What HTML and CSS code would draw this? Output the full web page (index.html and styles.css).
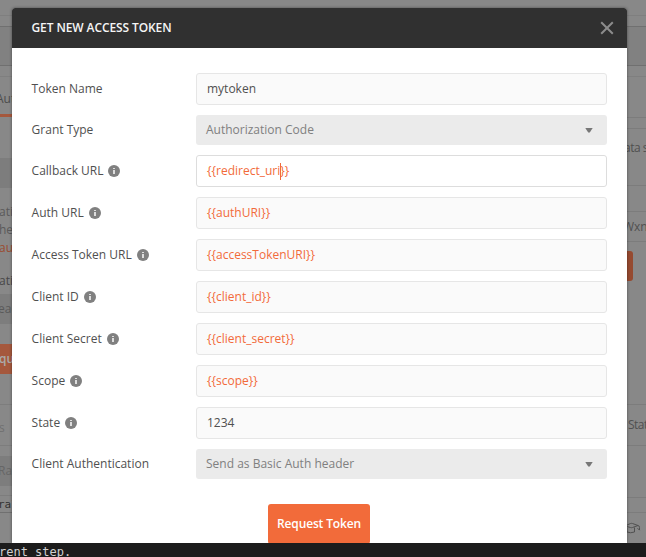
FILE: index.html
```html
<!DOCTYPE html>
<html lang="en">
<head>
<meta charset="utf-8">
<title>Get new access token</title>
<link rel="stylesheet" href="styles.css">
</head>
<body>
<div class="workspace">
  <div class="bar tabs"></div>
  <div class="bar toolbar"></div>
  <div class="bar spacer"></div>
  <div class="panes">
    <div class="pane left">
      <div class="cell auth-tab">Aut</div>
      <div class="cell gap-a"></div>
      <div class="cell field">&nbsp;</div>
      <div class="cell note first">ati</div>
      <div class="cell note">he</div>
      <div class="cell note link">au</div>
      <div class="cell label">ati</div>
      <div class="cell field header">eac</div>
      <div class="cell gap-b"></div>
      <div class="cell action">qu</div>
      <div class="cell gap-c"></div>
      <div class="cell response">s</div>
      <div class="cell gap-d"></div>
      <div class="cell field raw">Ra</div>
      <div class="cell gap-e"></div>
      <div class="cell code">ral</div>
    </div>
    <div class="pane right">
      <div class="cell r-tabs"></div>
      <div class="cell r-sub"></div>
      <div class="cell r-data">ata s</div>
      <div class="cell r-head"></div>
      <div class="cell r-token">Wxn</div>
      <div class="cell r-action"><span></span></div>
      <div class="cell r-status">Stat</div>
      <div class="cell r-body"></div>
      <div class="cell r-foot"></div>
      <div class="cell r-learn">
        <svg width="17" height="14" viewBox="0 0 17 14" fill="none" stroke="#505050" stroke-width="1"><path d="M0 4 5.500 1.500Q6.500 1.200 7.500 1.500L13 3.500 7.500 5.500Q6.500 5.900 5.500 5.500L0 4M2 5.500V10Q5.500 11.500 9.500 10V5.500M13 3.500Q14.500 3.700 14.500 5.500V8M12.500 6.200 14.500 8.200"/></svg>
      </div>
    </div>
  </div>
</div>
<div class="terminal">rent step.</div>

<div class="modal">
  <div class="modal-head">
    <span>GET NEW ACCESS TOKEN</span>
    <svg width="14" height="14" viewBox="0 0 14 14" stroke="#8c8c8c" stroke-width="2"><path d="M1.200 1.200 12.800 12.800M12.800 1.200 1.200 12.800"/></svg>
  </div>
  <div class="modal-body">
    <div class="row"><div class="name">Token Name</div><div class="input">mytoken</div></div>
    <div class="row"><div class="name">Grant Type</div><div class="select"><span>Authorization Code</span><i class="arrow"></i></div></div>
    <div class="row"><div class="name">Callback URL<i class="info"></i></div><div class="input var focus">{{redirect_uri<i class="caret"></i>}}</div></div>
    <div class="row"><div class="name">Auth URL<i class="info"></i></div><div class="input var">{{authURI}}</div></div>
    <div class="row"><div class="name">Access Token URL<i class="info"></i></div><div class="input var">{{accessTokenURI}}</div></div>
    <div class="row"><div class="name">Client ID<i class="info"></i></div><div class="input var">{{client_id}}</div></div>
    <div class="row"><div class="name">Client Secret<i class="info"></i></div><div class="input var">{{client_secret}}</div></div>
    <div class="row"><div class="name">Scope<i class="info"></i></div><div class="input var">{{scope}}</div></div>
    <div class="row"><div class="name">State<i class="info"></i></div><div class="input">1234</div></div>
    <div class="row"><div class="name">Client Authentication</div><div class="select"><span>Send as Basic Auth header</span><i class="arrow"></i></div></div>
    <div class="request">Request Token</div>
  </div>
</div>
</body>
</html>
```
FILE: styles.css
```css
* { box-sizing: border-box; }
body {
  margin: 0;
  width: 646px;
  height: 557px;
  overflow: hidden;
  position: relative;
  font: 12px/18px "Open Sans", sans-serif;
  color: #505050;
}
.workspace { height: 543px; background: #888; overflow: hidden; }
.bar { border-bottom: 1px solid #7f7f7f; }
.tabs { height: 16px; }
.toolbar { height: 50px; border-bottom-color: #707070; background: linear-gradient(#888 10px, #707070 10px, #707070 11px, #818181 11px); }
.spacer { height: 11px; }
.panes { display: flex; justify-content: space-between; }
.pane { overflow: hidden; white-space: nowrap; }
.left { width: 20px; }
.right { width: 19px; }
.cell { display: flex; align-items: center; flex: none; }

.left .cell { color: #5a5a5a; text-indent: -1px; }
.left .auth-tab { height: 40px; padding-top: 7px; border-bottom: 3px solid #a5583d; color: #4c4c4c; text-indent: -4px; }
.gap-a { height: 41px; }
.left .field { height: 30px; background: #7d7d7d; }
.left .note { height: 18px; }
.left .first { height: 33px; padding-top: 15px; }
.left .link { color: #9b4b30; }
.left .label { height: 37px; padding-top: 11px; color: #474747; }
.left .header { text-indent: -2px; }
.gap-b { height: 20px; }
.left .action { height: 30px; background: #a5583d; color: #aaa; font-weight: 600; }
.gap-c { height: 31px; border-bottom: 1px solid #7d7d7d; }
.left .response { height: 41px; padding-top: 5px; border-bottom: 1px solid #7d7d7d; color: #707070; }
.gap-d { height: 10px; }
.left .raw { color: #666; text-indent: -2px; }
.gap-e { height: 10px; border-bottom: 1px solid #7d7d7d; }
.left .code { height: 17px; border-bottom: 1px solid #707070; font: 11px "DejaVu Sans Mono", monospace; color: #333; text-indent: -2px; }

.right .cell { border-bottom: 1px solid #7c7c7c; }
.r-tabs { height: 41px; }
.r-sub { height: 11px; }
.r-data { height: 57px; padding-bottom: 18px; text-indent: -3px; letter-spacing: -.5px; color: #505050; }
.r-head { height: 26px; }
.r-token { height: 30px; text-indent: -4px; }
.r-action { height: 163px; align-items: flex-start; padding-top: 9px; }
.r-action span { width: 6px; height: 30px; border-radius: 0 3px 3px 0; background: #964a30; }
.r-status { height: 41px; padding-left: 1px; letter-spacing: -.5px; }
.r-body { height: 52px; }
.r-foot { height: 15px; }
.right .r-learn { height: 30px; border: 0; margin-left: -2px; padding-top: 2px; }

.terminal { height: 14px; overflow: hidden; background: #1c1c1c; color: #d0d0d0; font: 12px/18px "DejaVu Sans Mono", monospace; text-indent: -1px; }

.modal {
  position: absolute;
  left: 12px;
  top: 8px;
  width: 615px;
  height: 535px;
  overflow: hidden;
  border-radius: 3px 3px 0 0;
  background: #fff;
  box-shadow: 0 0 3px rgba(0, 0, 0, .45);
  clip-path: inset(-4px -4px 0 -4px);
}
.modal-head {
  height: 40px;
  padding: 0 13px 0 19.500px;
  display: flex;
  align-items: center;
  justify-content: space-between;
  background: #303030;
  color: #f5f5f5;
  font-weight: 600;
  letter-spacing: -.1px;
}
.modal-body { padding: 25px 20px 0 19px; display: flex; flex-direction: column; gap: 10px; }
.row { display: flex; align-items: center; }
.name { width: 165px; padding-left: .6px; display: flex; align-items: center; }
.input, .select { flex: 1; display: flex; align-items: center; border-radius: 3px; }
.input { height: 32px; padding: 0 10px; border: 1px solid #e6e6e6; background: #fafafa; }
.var { color: #f26b3a; }
.focus { background: #fff; border-color: #ddd; }
.caret { width: 1px; height: 17px; margin-right: -1px; background: #f26b3a; }
.select { height: 30px; padding: 0 14px 0 10px; justify-content: space-between; background: #ebebeb; color: #808080; }
.arrow { width: 8px; height: 5px; background: #777; clip-path: polygon(0 0, 100% 0, 60% 100%, 40% 100%); }
.info {
  width: 12px;
  height: 12px;
  margin-left: 5px;
  border-radius: 50%;
  background: linear-gradient(#ddd, #ddd) 5px 3px / 2px 1px no-repeat, linear-gradient(#ddd, #ddd) 5px 5px / 2px 4px no-repeat, #808080;
}
.request {
  width: 102px;
  height: 40px;
  margin: 15px 0 0 237px;
  border-radius: 3px;
  background: #f26b3a;
  color: #fff;
  font-weight: 600;
  letter-spacing: -.15px;
  line-height: 40px;
  text-align: center;
}
```
